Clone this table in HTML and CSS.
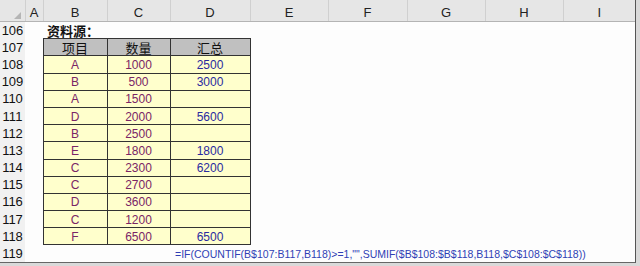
FILE: index.html
```html
<!DOCTYPE html>
<html lang="zh">
<head>
<meta charset="utf-8">
<link rel="stylesheet" href="styles.css">
</head>
<body>
<div class="frame">
<table class="sheet">
<colgroup>
<col class="w-rh"><col class="w-a"><col class="w-b"><col class="w-c"><col class="w-d"><col class="w-e"><col class="w-f"><col class="w-g"><col class="w-h"><col class="w-i">
</colgroup>
<thead>
<tr class="colhead">
<th class="corner"><svg width="25" height="21" viewBox="0 0 25 21"><polygon points="21,12 21,19 14,19" fill="#b5b5b5"/></svg></th>
<th>A</th><th>B</th><th>C</th><th>D</th><th>E</th><th>F</th><th>G</th><th>H</th><th>I</th>
</tr>
</thead>
<tbody>
<tr><th class="rh">106</th><td></td><td class="title" colspan="3">资料源：</td><td></td><td></td><td></td><td></td><td></td></tr>
<tr><th class="rh">107</th><td></td><td class="hd">项目</td><td class="hd">数量</td><td class="hd">汇总</td><td></td><td></td><td></td><td></td><td></td></tr>
<tr><th class="rh">108</th><td></td><td class="dt p">A</td><td class="dt p">1000</td><td class="dt b">2500</td><td></td><td></td><td></td><td></td><td></td></tr>
<tr><th class="rh">109</th><td></td><td class="dt p">B</td><td class="dt p">500</td><td class="dt b">3000</td><td></td><td></td><td></td><td></td><td></td></tr>
<tr><th class="rh">110</th><td></td><td class="dt p">A</td><td class="dt p">1500</td><td class="dt b"></td><td></td><td></td><td></td><td></td><td></td></tr>
<tr><th class="rh">111</th><td></td><td class="dt p">D</td><td class="dt p">2000</td><td class="dt b">5600</td><td></td><td></td><td></td><td></td><td></td></tr>
<tr><th class="rh">112</th><td></td><td class="dt p">B</td><td class="dt p">2500</td><td class="dt b"></td><td></td><td></td><td></td><td></td><td></td></tr>
<tr><th class="rh">113</th><td></td><td class="dt p">E</td><td class="dt p">1800</td><td class="dt b">1800</td><td></td><td></td><td></td><td></td><td></td></tr>
<tr><th class="rh">114</th><td></td><td class="dt p">C</td><td class="dt p">2300</td><td class="dt b">6200</td><td></td><td></td><td></td><td></td><td></td></tr>
<tr><th class="rh">115</th><td></td><td class="dt p">C</td><td class="dt p">2700</td><td class="dt b"></td><td></td><td></td><td></td><td></td><td></td></tr>
<tr><th class="rh">116</th><td></td><td class="dt p">D</td><td class="dt p">3600</td><td class="dt b"></td><td></td><td></td><td></td><td></td><td></td></tr>
<tr><th class="rh">117</th><td></td><td class="dt p">C</td><td class="dt p">1200</td><td class="dt b"></td><td></td><td></td><td></td><td></td><td></td></tr>
<tr><th class="rh">118</th><td></td><td class="dt p">F</td><td class="dt p">6500</td><td class="dt b">6500</td><td></td><td></td><td></td><td></td><td></td></tr>
<tr><th class="rh">119</th><td></td><td></td><td></td><td class="formula" colspan="6">=IF(COUNTIF(B$107:B117,B118)&gt;=1,"",SUMIF($B$108:$B$118,B118,$C$108:$C$118))</td></tr>
</tbody>
</table>
</div>
</body>
</html>
```
FILE: styles.css
```css
html, body {
  margin: 0;
  padding: 0;
}
body {
  background: #d9d9d9;
  width: 640px;
  height: 266px;
  overflow: hidden;
  font-family: "Liberation Sans", Arial, sans-serif;
}
.frame {
  width: 635px;
  height: 262px;
  background: #fdfdfd;
  border-right: 1px solid #555;
  border-bottom: 1px solid #666;
  overflow: hidden;
}
.sheet {
  table-layout: fixed;
  border-collapse: collapse;
  width: 635px;
}
.w-rh { width: 25px; }
.w-a { width: 18px; }
.w-b { width: 64px; }
.w-c { width: 63px; }
.w-d { width: 80px; }
.w-e { width: 78px; }
.w-f { width: 79px; }
.w-g { width: 78px; }
.w-h { width: 78px; }
.w-i { width: 72px; }

.colhead { height: 21.5px; }
.colhead th {
  padding: 0;
  background: #e6e6e6;
  border-bottom: 1px solid #b4b4b4;
  border-left: 1px solid #d0d0d0;
  font-weight: normal;
  font-size: 13px;
  color: #222;
  text-align: center;
  vertical-align: bottom;
  line-height: 17px;
}
.colhead th.corner {
  border-left: none;
  vertical-align: top;
  line-height: 0;
}
.corner svg { display: block; }

tbody tr { height: 17.2px; }
tbody td, tbody th {
  line-height: 14px;
  font-size: 12px;
  white-space: nowrap;
  overflow: visible;
  padding: 1px 0 0 0;
}
.rh {
  background: #f1f1f1;
  font-weight: normal;
  font-size: 13px;
  color: #111;
  text-align: center;
}
.title {
  font-family: "Noto Sans CJK SC", sans-serif;
  font-weight: bold;
  font-size: 13px;
  color: #111;
  text-align: left;
}
tbody td.title {
  padding-left: 4px;
}
.hd {
  background: #c0c0c0;
  border: 1px solid #333;
  font-family: "Noto Sans CJK SC", sans-serif;
  font-size: 13px;
  color: #111;
  text-align: center;
}
.dt {
  background: #ffffcc;
  border: 1px solid #333;
  text-align: center;
  font-size: 12px;
}
.p { color: #7a2566; }
.b { color: #2a2aa0; }
tbody td.formula {
  font-size: 10.5px;
  color: #2f3fb5;
  text-align: left;
  padding-left: 5px;
  overflow: hidden;
}
```
